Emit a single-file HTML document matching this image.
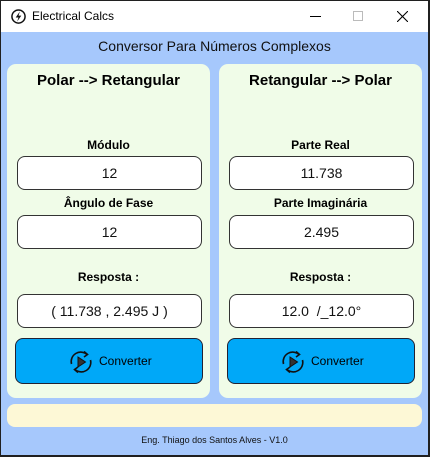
<!DOCTYPE html>
<html><head><style>
*{margin:0;padding:0;box-sizing:border-box}
body{width:430px;height:457px;background:#202020;position:relative;overflow:hidden;font-family:"Liberation Sans",sans-serif}
.win{position:absolute;left:1px;top:1px;width:427px;height:454px;background:#a6c8fc}
.title{position:absolute;left:0;top:0;width:427px;height:31px;background:#fff}
.title .t{position:absolute;left:31px;top:8px;font-size:12px;color:#000}
.abs{position:absolute}
.panel{position:absolute;top:63px;width:203px;height:334px;background:#f0fce8;border-radius:9px}
.h{position:absolute;left:0;width:100%;text-align:center;font-weight:bold;font-size:15px;color:#000}
.lbl{position:absolute;left:0;width:100%;text-align:center;font-weight:bold;font-size:12px;color:#000}
.in{position:absolute;left:10px;width:185px;height:34px;background:#fff;border:1px solid #333;border-radius:8px;text-align:center;line-height:32px;font-size:14px;color:#111}
.btn{position:absolute;left:8px;width:188px;height:46px;background:#00a8f8;border:1px solid #223;border-radius:8px;font-size:12px;color:#000}
.btn svg{position:absolute;left:52px;top:10px}
.btn span{position:absolute;left:83px;top:15px}
</style></head><body>
<div class="win">
<div class="title">
<svg class="abs" style="left:10px;top:8px" width="15" height="15" viewBox="0 0 16 16"><circle cx="8" cy="8" r="7" fill="none" stroke="#111" stroke-width="1.6"/><path d="M9.5 2.5 L5 9 H8 L6.5 13.5 L11 7 H8 Z" fill="#111"/></svg>
<div class="t">Electrical Calcs</div>
<div class="abs" style="left:309px;top:15px;width:11px;height:1px;background:#000"></div>
<div class="abs" style="left:352px;top:10px;width:10px;height:10px;border:1px solid #bbb"></div>
<svg class="abs" style="left:396px;top:10px" width="11" height="11"><path d="M0 0L11 11M11 0L0 11" stroke="#000" stroke-width="1.1"/></svg>
</div>
<div class="abs" style="left:0;top:37px;width:427px;text-align:center;font-size:14px;color:#111">Conversor Para Números Complexos</div>
<div class="panel" style="left:6px">
<div class="h" style="top:8px">Polar --&gt; Retangular</div>
<div class="lbl" style="top:74px">Módulo</div>
<div class="in" style="top:92px">12</div>
<div class="lbl" style="top:132px">Ângulo de Fase</div>
<div class="in" style="top:151px">12</div>
<div class="lbl" style="top:206px">Resposta :</div>
<div class="in" style="top:230px">( 11.738 , 2.495 J )</div>
<div class="btn" style="top:274px"><svg width="26" height="26" viewBox="0 0 26 26"><path d="M3.5 15A9.5 9.5 0 0 1 19 5.5" fill="none" stroke="#111" stroke-width="1.6"/><path d="M22.5 11A9.5 9.5 0 0 1 7 20.5" fill="none" stroke="#111" stroke-width="1.6"/><path d="M16 2.5L19.5 5.5L16 8" fill="none" stroke="#111" stroke-width="1.6"/><path d="M10 23.5L6.5 20.5L10 18" fill="none" stroke="#111" stroke-width="1.6"/><path d="M10 8L17.5 13L10 18Z" fill="#333" stroke="#111" stroke-width="1"/></svg><span>Converter</span></div>
</div>
<div class="panel" style="left:218px">
<div class="h" style="top:8px">Retangular --&gt; Polar</div>
<div class="lbl" style="top:74px">Parte Real</div>
<div class="in" style="top:92px">11.738</div>
<div class="lbl" style="top:132px">Parte Imaginária</div>
<div class="in" style="top:151px">2.495</div>
<div class="lbl" style="top:206px">Resposta :</div>
<div class="in" style="top:230px">12.0 &nbsp;/_12.0°</div>
<div class="btn" style="top:274px"><svg width="26" height="26" viewBox="0 0 26 26"><path d="M3.5 15A9.5 9.5 0 0 1 19 5.5" fill="none" stroke="#111" stroke-width="1.6"/><path d="M22.5 11A9.5 9.5 0 0 1 7 20.5" fill="none" stroke="#111" stroke-width="1.6"/><path d="M16 2.5L19.5 5.5L16 8" fill="none" stroke="#111" stroke-width="1.6"/><path d="M10 23.5L6.5 20.5L10 18" fill="none" stroke="#111" stroke-width="1.6"/><path d="M10 8L17.5 13L10 18Z" fill="#333" stroke="#111" stroke-width="1"/></svg><span>Converter</span></div>
</div>
<div class="abs" style="left:6px;top:403px;width:415px;height:23px;background:#fdf8d6;border-radius:8px"></div>
<div class="abs" style="left:0;top:434px;width:427px;text-align:center;font-size:9px;color:#111">Eng. Thiago dos Santos Alves - V1.0</div>
</div>
</body></html>
